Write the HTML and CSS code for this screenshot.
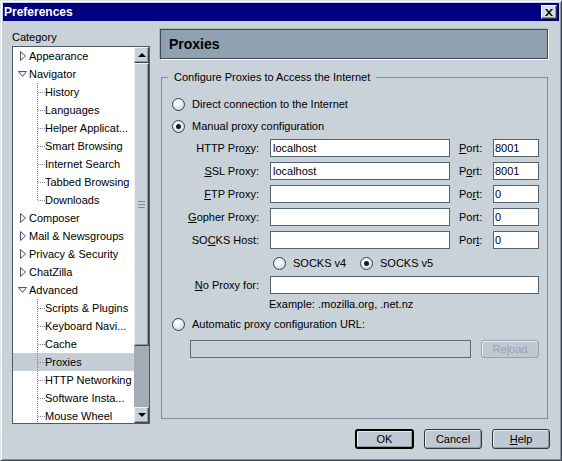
FILE: index.html
```html
<!DOCTYPE html>
<html>
<head>
<meta charset="utf-8">
<title>Preferences</title>
<link rel="stylesheet" href="styles.css">
</head>
<body>
<div class="window">
  <div class="titlebar">
    <span class="title">Preferences</span>
    <span class="close"><svg width="8" height="7" viewBox="0 0 8 7"><path d="M0 0h2l2 2.5L6 0h2L5 3.5 8 7H6L4 4.5 2 7H0l3-3.5z" fill="#000"/></svg></span>
  </div>
  <div class="client">
    <div class="main">
      <div class="sidebar">
        <div class="cat-label">Category</div>
        <div class="tree">
          <div class="rows">
            <div class="row top"><span class="twisty"><svg width="7" height="10" viewBox="0 0 7 10"><path d="M0.5 0.5L5.5 5L0.5 9.5Z" fill="#eef2f6" stroke="#4a5663"/></svg></span>Appearance</div>
            <div class="row top"><span class="twisty"><svg width="10" height="7" viewBox="0 0 10 7"><path d="M0.5 0.5H8.5L4.5 5.5Z" fill="#eef2f6" stroke="#4a5663"/></svg></span>Navigator</div>
            <div class="row child"><span class="branch"></span>History</div>
            <div class="row child"><span class="branch"></span>Languages</div>
            <div class="row child"><span class="branch"></span>Helper Applicat...</div>
            <div class="row child"><span class="branch"></span>Smart Browsing</div>
            <div class="row child"><span class="branch"></span>Internet Search</div>
            <div class="row child"><span class="branch"></span>Tabbed Browsing</div>
            <div class="row child"><span class="branch last"></span>Downloads</div>
            <div class="row top"><span class="twisty"><svg width="7" height="10" viewBox="0 0 7 10"><path d="M0.5 0.5L5.5 5L0.5 9.5Z" fill="#eef2f6" stroke="#4a5663"/></svg></span>Composer</div>
            <div class="row top"><span class="twisty"><svg width="7" height="10" viewBox="0 0 7 10"><path d="M0.5 0.5L5.5 5L0.5 9.5Z" fill="#eef2f6" stroke="#4a5663"/></svg></span>Mail &amp; Newsgroups</div>
            <div class="row top"><span class="twisty"><svg width="7" height="10" viewBox="0 0 7 10"><path d="M0.5 0.5L5.5 5L0.5 9.5Z" fill="#eef2f6" stroke="#4a5663"/></svg></span>Privacy &amp; Security</div>
            <div class="row top"><span class="twisty"><svg width="7" height="10" viewBox="0 0 7 10"><path d="M0.5 0.5L5.5 5L0.5 9.5Z" fill="#eef2f6" stroke="#4a5663"/></svg></span>ChatZilla</div>
            <div class="row top"><span class="twisty"><svg width="10" height="7" viewBox="0 0 10 7"><path d="M0.5 0.5H8.5L4.5 5.5Z" fill="#eef2f6" stroke="#4a5663"/></svg></span>Advanced</div>
            <div class="row child"><span class="branch"></span>Scripts &amp; Plugins</div>
            <div class="row child"><span class="branch"></span>Keyboard Navi...</div>
            <div class="row child"><span class="branch"></span>Cache</div>
            <div class="row child sel"><span class="branch"></span>Proxies</div>
            <div class="row child"><span class="branch"></span>HTTP Networking</div>
            <div class="row child"><span class="branch"></span>Software Insta...</div>
            <div class="row child"><span class="branch"></span>Mouse Wheel</div>
          </div>
          <div class="scrollbar">
            <div class="sb-btn"><span class="arrow-up"></span></div>
            <div class="sb-thumb"><span class="grip"></span></div>
            <div class="sb-track"></div>
            <div class="sb-btn"><span class="arrow-down"></span></div>
          </div>
        </div>
      </div>
      <div class="panel">
        <div class="panel-header">Proxies</div>
        <fieldset class="group">
          <legend>Configure Proxies to Access the Internet</legend>
          <div class="group-body">
            <div class="radio-row"><span class="radio"></span>Direct connection to the Internet</div>
            <div class="radio-row r2"><span class="radio on"></span>Manual proxy configuration</div>

            <div class="field-row first">
              <span class="flabel">HTTP Pro<u>x</u>y:</span>
              <input class="text host" type="text" value="localhost">
              <span class="plabel"><u>P</u>ort:</span>
              <input class="text port" type="text" value="8001">
            </div>
            <div class="field-row">
              <span class="flabel"><u>S</u>SL Proxy:</span>
              <input class="text host" type="text" value="localhost">
              <span class="plabel">P<u>o</u>rt:</span>
              <input class="text port" type="text" value="8001">
            </div>
            <div class="field-row">
              <span class="flabel"><u>F</u>TP Proxy:</span>
              <input class="text host" type="text" value="">
              <span class="plabel">Po<u>r</u>t:</span>
              <input class="text port" type="text" value="0">
            </div>
            <div class="field-row">
              <span class="flabel"><u>G</u>opher Proxy:</span>
              <input class="text host" type="text" value="">
              <span class="plabel">Port:</span>
              <input class="text port" type="text" value="0">
            </div>
            <div class="field-row">
              <span class="flabel">SO<u>C</u>KS Host:</span>
              <input class="text host" type="text" value="">
              <span class="plabel">Por<u>t</u>:</span>
              <input class="text port" type="text" value="0">
            </div>

            <div class="socks-row">
              <span class="socks-opt"><span class="radio"></span>SOCKS v4</span>
              <span class="socks-opt"><span class="radio on"></span>SOCKS v5</span>
            </div>

            <div class="noproxy-row">
              <span class="flabel"><u>N</u>o Proxy for:</span>
              <input class="text noproxy" type="text" value="">
            </div>
            <div class="example">Example: .mozilla.org, .net.nz</div>

            <div class="radio-row auto"><span class="radio"></span>Automatic proxy configuration URL:</div>
            <div class="url-row">
              <input class="text url" type="text" value="" disabled>
              <span class="btn disabled">Re<u>l</u>oad</span>
            </div>
          </div>
        </fieldset>
      </div>
    </div>
    <div class="buttons">
      <span class="btn dlg default">OK</span>
      <span class="btn dlg">Cancel</span>
      <span class="btn dlg"><u>H</u>elp</span>
    </div>
  </div>
</div>
</body>
</html>
```

FILE: styles.css
```css
* { box-sizing: border-box; }
html, body { margin: 0; padding: 0; }
body {
  width: 562px;
  height: 461px;
  overflow: hidden;
  font-family: "Liberation Sans", Arial, sans-serif;
  font-size: 11px;
  color: #000;
  background: #c9d1d9;
}
u { text-decoration: underline; text-underline-offset: 1px; }

.window {
  width: 562px;
  height: 461px;
  display: flex;
  flex-direction: column;
  background: #c9d1d9;
  border: 1px solid;
  border-color: #dfe4e9 #3c4650 #3c4650 #dfe4e9;
  box-shadow: inset 1px 1px 0 #ffffff, inset -1px -1px 0 #87929d;
  padding: 2px;
}

.titlebar {
  flex: none;
  height: 18px;
  background: #000080;
  color: #fff;
  display: flex;
  align-items: center;
  justify-content: space-between;
  padding: 0 2px 0 1px;
}
.title { font-weight: bold; font-size: 12px; }
.close {
  width: 16px;
  height: 14px;
  background: #d6dce2;
  border: 1px solid;
  border-color: #ffffff #2e3740 #2e3740 #ffffff;
  box-shadow: inset -1px -1px 0 #8a949e;
  display: flex;
  align-items: center;
  justify-content: center;
}
.close svg { display: block; }

.client {
  flex: 1;
  display: flex;
  flex-direction: column;
  padding: 8px 9px 9px 9px;
}
.main { display: flex; gap: 10px; }

.sidebar { width: 138px; display: flex; flex-direction: column; }
.cat-label { height: 14px; line-height: 14px; margin-top: 1px; margin-bottom: 2px; }

.tree {
  height: 378px;
  display: flex;
  background: #fff;
  border: 1px solid #4f5b68;
  overflow: hidden;
}
.rows { flex: 1; overflow: hidden; }
.row {
  height: 18px;
  display: flex;
  align-items: center;
  white-space: nowrap;
}
.row.top { padding-left: 4px; }
.twisty {
  width: 12px;
  height: 18px;
  display: flex;
  align-items: center;
  justify-content: center;
  flex: none;
}
.twisty svg { display: block; }
.row.child { padding-left: 24px; }
.row.sel { background: #c5cdd6; }
.branch {
  width: 8px;
  height: 18px;
  flex: none;
  background-image:
    repeating-linear-gradient(to bottom, #7a8591 0 1px, transparent 1px 2px),
    repeating-linear-gradient(to right, #7a8591 0 1px, transparent 1px 2px);
  background-size: 1px 100%, 7px 1px;
  background-position: 0 0, 1px 9px;
  background-repeat: no-repeat;
}
.branch.last { background-size: 1px 10px, 7px 1px; }

.scrollbar { width: 15px; display: flex; flex-direction: column; flex: none; }
.sb-btn {
  height: 16px;
  flex: none;
  background: #c9d1d9;
  border: 1px solid;
  border-color: #eef1f4 #3c4650 #3c4650 #eef1f4;
  box-shadow: inset -1px -1px 0 #8f99a4;
  display: flex;
  align-items: center;
  justify-content: center;
}
.arrow-up { width: 0; height: 0; border-left: 4px solid transparent; border-right: 4px solid transparent; border-bottom: 4px solid #000; }
.arrow-down { width: 0; height: 0; border-left: 4px solid transparent; border-right: 4px solid transparent; border-top: 4px solid #000; }
.sb-thumb {
  height: 283px;
  flex: none;
  background: #c9d1d9;
  border: 1px solid;
  border-color: #eef1f4 #3c4650 #3c4650 #eef1f4;
  box-shadow: inset -1px -1px 0 #8f99a4;
  display: flex;
  align-items: center;
  justify-content: center;
}
.grip {
  width: 7px;
  height: 7px;
  background: repeating-linear-gradient(to bottom, #7d8894 0 1px, transparent 1px 3px);
}
.sb-track { flex: 1; background: #a3adb8; }

.panel { width: 389px; display: flex; flex-direction: column; }
.panel-header {
  width: 388px;
  height: 30px;
  background: #8fa0b1;
  border: 1px solid #3c4957;
  box-shadow: 1px 1px 0 #ffffff, -1px -1px 0 #a9b3bd;
  font-weight: bold;
  font-size: 14px;
  line-height: 28px;
  padding-left: 8px;
}

.group {
  margin: 11px 0 0 1px;
  width: 387px;
  height: 349px;
  padding: 0;
  border: 1px solid #848f9b;
  min-width: 0;
}
.group legend {
  margin-left: 6px;
  padding: 0 6px;
  line-height: 14px;
  height: 14px;
}
.group-body { padding: 11px 0 0 10px; }

.radio-row { display: flex; align-items: center; height: 18px; gap: 7px; white-space: nowrap; }
.radio-row.r2 { margin-top: 4px; }
.radio-row.auto { margin-top: 4px; }
.radio {
  width: 13px;
  height: 13px;
  flex: none;
  border-radius: 50%;
  border: 1px solid #37414b;
  background: radial-gradient(circle at 40% 35%, #ffffff 0, #eef3f6 35%, #bccad5 100%);
  display: flex;
  align-items: center;
  justify-content: center;
}
.radio.on::after {
  content: "";
  width: 5px;
  height: 5px;
  border-radius: 50%;
  background: #1a1a1a;
}

.field-row { display: flex; align-items: center; height: 18px; margin-top: 5px; }
.field-row.first { margin-top: 4px; }
.flabel { width: 87px; text-align: right; margin-right: 11px; flex: none; white-space: nowrap; }
.plabel { width: 24px; margin-left: 9px; margin-right: 10px; flex: none; }
.text {
  height: 18px;
  border: 1px solid #55626f;
  background: #fff;
  font-family: "Liberation Sans", Arial, sans-serif;
  font-size: 11px;
  color: #000;
  padding: 0 2px;
  margin: 0;
  outline: none;
  appearance: none;
  border-radius: 0;
  flex: none;
}
.text.host { width: 180px; }
.text.port { width: 46px; padding-left: 1px; }
.text.noproxy { width: 269px; }
.text.url { width: 281px; background: #c9d1d9; border-color: #5f6b77; }

.socks-row { display: flex; align-items: center; height: 18px; margin-top: 5px; padding-left: 101px; }
.socks-opt { display: flex; align-items: center; gap: 7px; width: 87px; }
.noproxy-row { display: flex; align-items: center; height: 18px; margin-top: 4px; }
.example { margin-top: 3px; padding-left: 97px; line-height: 14px; height: 14px; }
.url-row { display: flex; align-items: center; height: 18px; margin-top: 7px; padding-left: 18px; gap: 10px; }

.btn {
  display: flex;
  align-items: center;
  justify-content: center;
  border-radius: 3px;
  background: #bfc9d3;
  border: 1px solid #2c3640;
  box-shadow: inset 1px 1px 0 #e8edf1, inset -1px -1px 0 #8e99a4;
}
.btn.disabled {
  width: 58px;
  height: 18px;
  color: #97a3af;
  border-color: #97a3af;
  box-shadow: inset 1px 1px 0 #e8edf1;
}

.buttons { display: flex; justify-content: flex-end; gap: 10px; margin-top: 5px; }
.btn.dlg { width: 58px; height: 20px; }
.btn.default { width: 59px; border: 2px solid #000; }
```
